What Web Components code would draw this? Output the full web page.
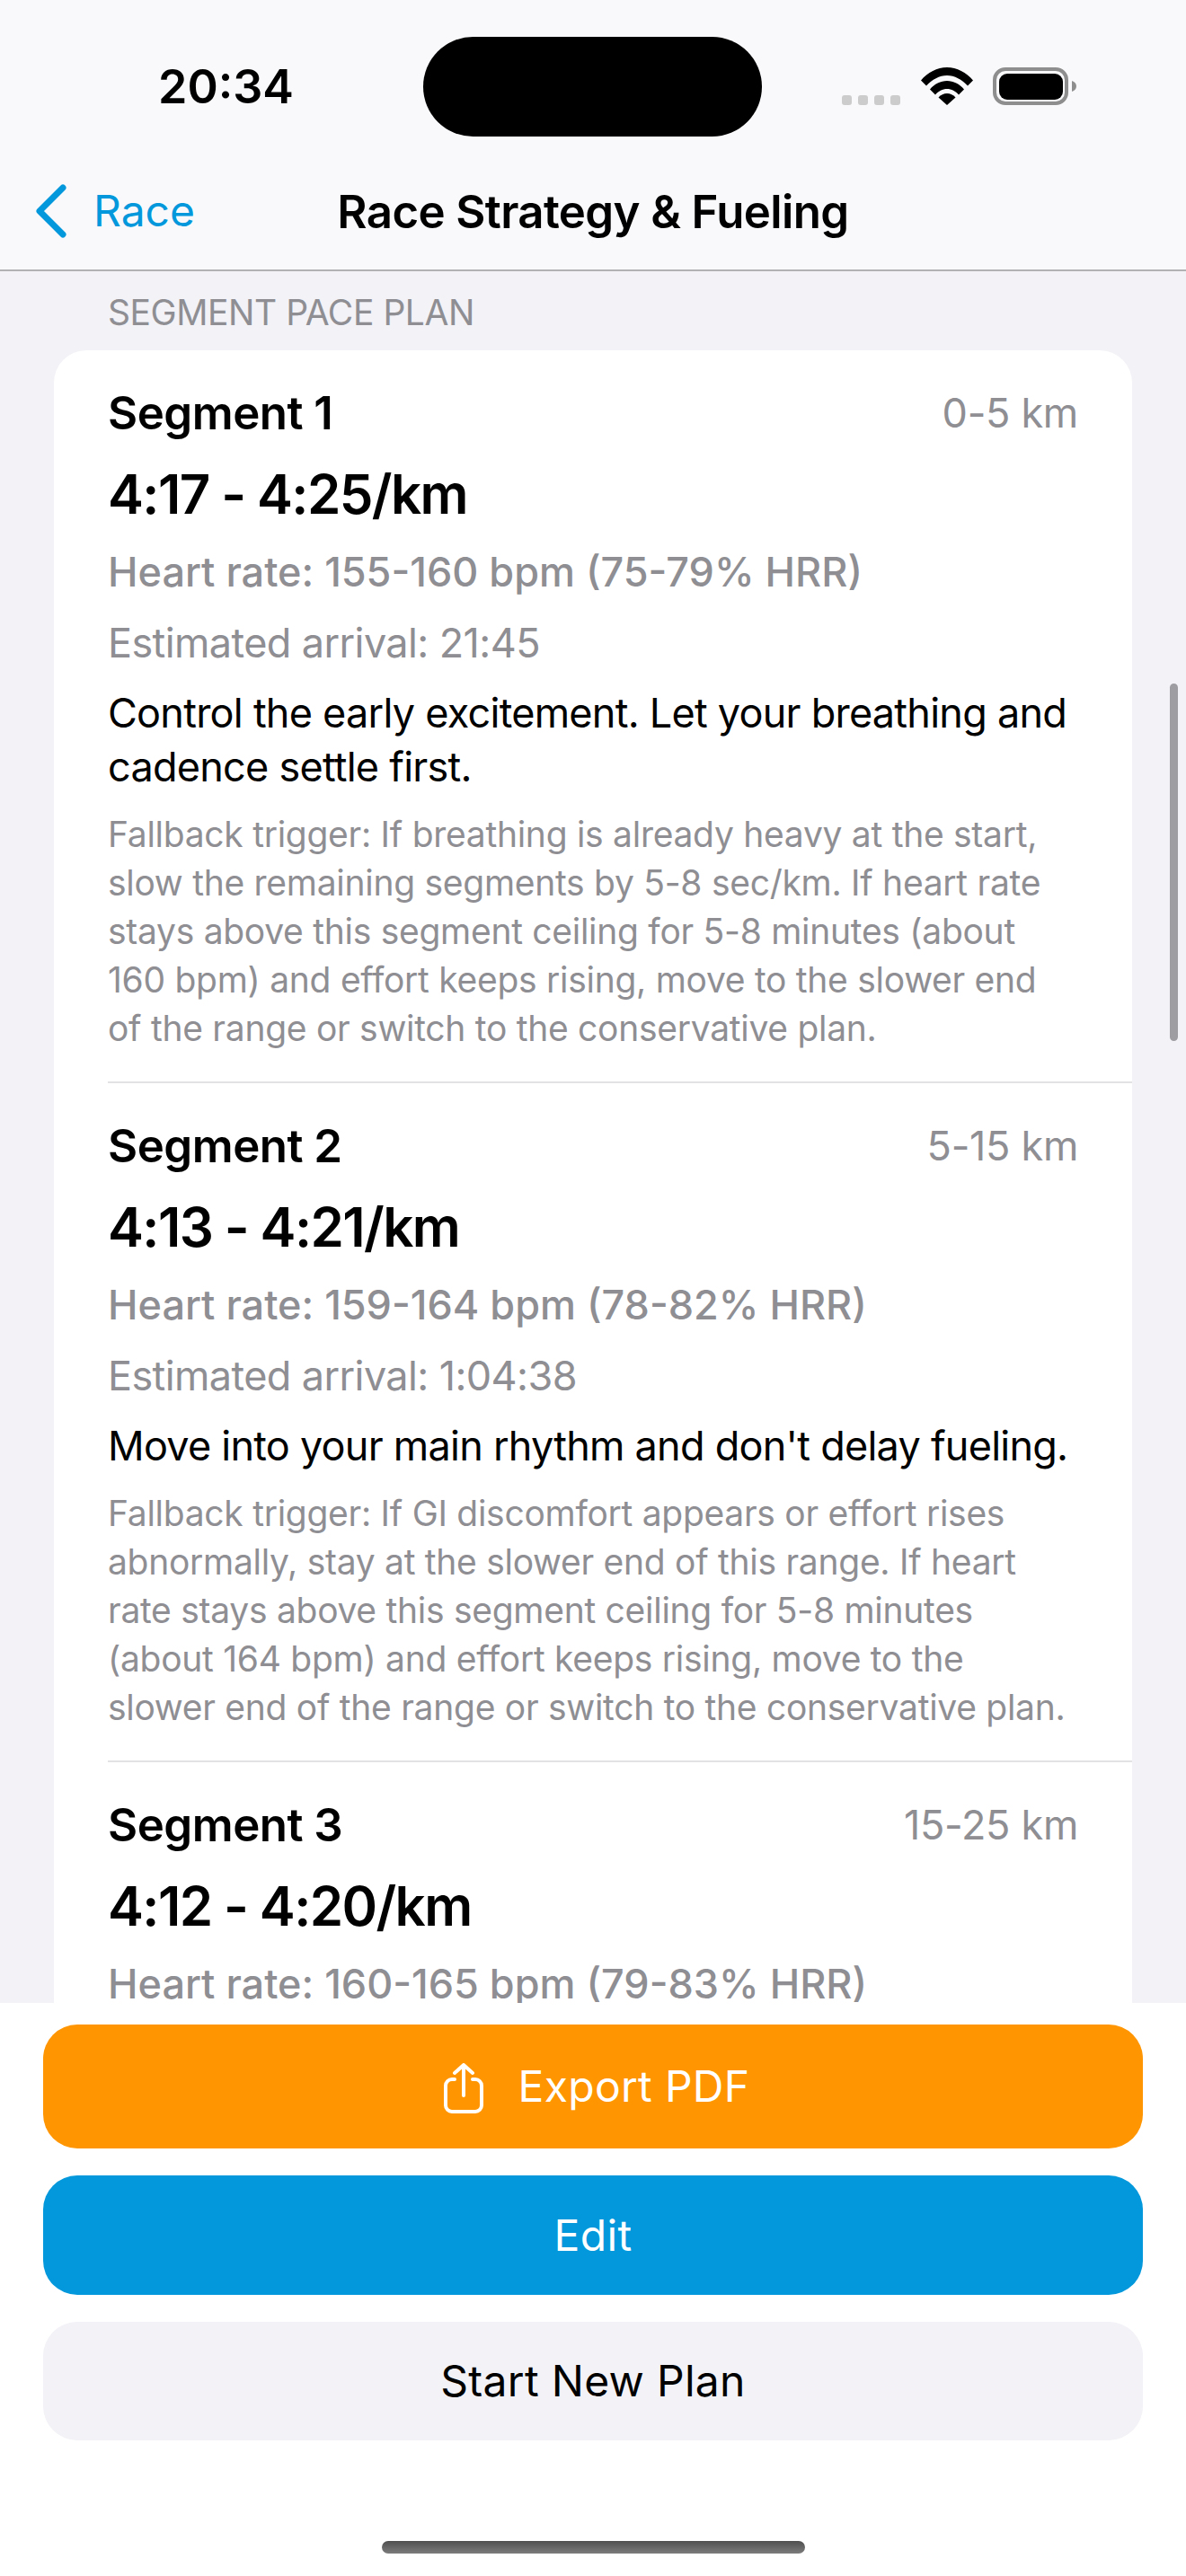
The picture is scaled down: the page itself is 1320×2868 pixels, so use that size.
<!DOCTYPE html>
<html lang="en"><head><meta charset="utf-8"><title>Race Strategy & Fueling</title>
<style>
html,body{margin:0;padding:0;background:#f2f2f7}
body{font-family:Inter,"Liberation Sans",sans-serif;color:#000;-webkit-font-smoothing:antialiased}
</style></head><body>
<race-app>
  <nav-header slot="header"></nav-header>
  <section-label>SEGMENT PACE PLAN</section-label>
  <plan-card>
    <segment-row name="Segment 1" range="0-5 km" pace="4:17 - 4:25/km" hr="Heart rate: 155-160 bpm (75-79% HRR)" eta="Estimated arrival: 21:45">
      <span slot="cue">Control the early excitement. Let your breathing and<br>cadence settle first.</span>
      <span slot="note">Fallback trigger: If breathing is already heavy at the start,<br>slow the remaining segments by 5-8 sec/km. If heart rate<br>stays above this segment ceiling for 5-8 minutes (about<br>160 bpm) and effort keeps rising, move to the slower end<br>of the range or switch to the conservative plan.</span>
    </segment-row>
    <segment-row name="Segment 2" range="5-15 km" pace="4:13 - 4:21/km" hr="Heart rate: 159-164 bpm (78-82% HRR)" eta="Estimated arrival: 1:04:38">
      <span slot="cue">Move into your main rhythm and don't delay fueling.</span>
      <span slot="note">Fallback trigger: If GI discomfort appears or effort rises<br>abnormally, stay at the slower end of this range. If heart<br>rate stays above this segment ceiling for 5-8 minutes<br>(about 164 bpm) and effort keeps rising, move to the<br>slower end of the range or switch to the conservative plan.</span>
    </segment-row>
    <segment-row name="Segment 3" range="15-25 km" pace="4:12 - 4:20/km" hr="Heart rate: 160-165 bpm (79-83% HRR)" last></segment-row>
  </plan-card>
  <action-bar slot="footer"></action-bar>
</race-app>
<script>
customElements.define('race-app',class extends HTMLElement{constructor(){super();this.attachShadow({mode:'open'}).innerHTML=`
<style>
:host{display:flex;flex-direction:column;width:1320px;height:2868px;overflow:hidden;background:#f2f2f7;position:relative}
.scroll{flex:1;min-height:0;overflow:hidden;position:relative;padding:0 60px;display:flex;flex-direction:column}
.bar{position:absolute;left:1302px;top:459px;width:9px;height:398px;border-radius:5px;background:#9d9da2}
</style>
<slot name="header"></slot>
<div class="scroll"><slot></slot><div class="bar"></div></div>
<slot name="footer"></slot>`}});
customElements.define('nav-header',class extends HTMLElement{constructor(){super();this.attachShadow({mode:'open'}).innerHTML=`
<style>
:host{display:block;height:302px;box-sizing:border-box;background:#f9f9fb;border-bottom:2px solid #b2b2b4;flex:none}
.status{height:167px;position:relative;display:flex;align-items:flex-start}
.time{font:600 52px/60px Inter,sans-serif;margin:67px 0 0 176px}
.island{position:absolute;left:471px;top:41px;width:377px;height:111px;border-radius:56px;background:#000}
.right{position:absolute;left:937px;top:75px;display:flex;align-items:flex-end;height:42px}
.dots{display:flex;gap:7px;margin-right:23px}
.dots i{display:block;width:11px;height:11px;border-radius:3px;background:#ccc}
.wifi{display:block;width:58px;height:42px;margin-right:22px}
.batt{display:block;width:93px;height:42px}
.nav{position:relative;height:133px;display:flex;align-items:center}
.back{display:flex;align-items:center;color:#0398dc;font:400 48px/60px Inter,sans-serif;margin:3px 0 0 40px}
.back svg{width:36px;height:60px;margin-right:28px;display:block}
.title{position:absolute;left:0;right:0;top:39px;text-align:center;font:600 51px/60px Inter,sans-serif;letter-spacing:-.63px}
</style>
<div class="status"><div class="time">20:34</div><div class="island"></div>
<div class="right"><div class="dots"><i></i><i></i><i></i><i></i></div>
<svg class="wifi" viewBox="0 0 58 42"><path d="M0 14.500C7.500 5.500 18 0 29 0s21.500 5.500 29 14.500l-6 6C45.500 13.500 37.500 9 29 9S12.500 13.500 6 20.500z"/><path d="M10 24.500C15 18.500 22 15 29 15s14 3.500 19 9.500l-6 6C38.500 26.500 34 24 29 24s-9.500 2.500-13 6.500z"/><path d="M19.500 33.500C22 30.500 25.500 29 29 29s7 1.500 9.500 4.500L29 42z"/></svg>
<svg class="batt" viewBox="0 0 93 42"><rect x="2" y="2" width="80" height="38" rx="12" fill="none" stroke="#8e8e8e" stroke-width="4"/><rect x="7" y="7" width="71" height="29" rx="9"/><path d="M88 15c3 1 5 3 5 6s-2 5-5 6z" fill="#8e8e8e"/></svg>
</div></div>
<div class="nav"><div class="back"><svg viewBox="0 0 36 60"><path d="M30 4 4 30l26 26" fill="none" stroke="#0398dc" stroke-width="7" stroke-linecap="round" stroke-linejoin="round"/></svg>Race</div><div class="title">Race Strategy &amp; Fueling</div></div>`}});
customElements.define('section-label',class extends HTMLElement{constructor(){super();this.attachShadow({mode:'open'}).innerHTML=`
<style>:host{display:block;flex:none;font:400 39px/48px Inter,sans-serif;letter-spacing:-.45px;color:#8e8e93;padding:22px 0 18px 60px;height:48px}</style><slot></slot>`}});
customElements.define('plan-card',class extends HTMLElement{constructor(){super();this.attachShadow({mode:'open'}).innerHTML=`
<style>:host{display:block;flex:none;background:#fff;border-radius:36px;overflow:hidden;padding-left:60px}</style><slot></slot>`}});
customElements.define('segment-row',class extends HTMLElement{constructor(){super();const a=n=>this.getAttribute(n);const line=(c,n)=>a(n)?`<div class="${c}">${a(n)}</div>`:'';this.attachShadow({mode:'open'}).innerHTML=`
<style>
:host{display:block;padding:46px 60px 32px 0;border-bottom:2px solid #e2e2e4}
:host([last]){border-bottom:0}
.top{display:flex;justify-content:space-between;align-items:center;height:48px}
.name{font:600 51px/48px Inter,sans-serif;letter-spacing:-.5px}
.range{font:400 45px/48px Inter,sans-serif;color:#8e8e93;letter-spacing:-.3px}
.pace{font:620 60px/72px Inter,sans-serif;margin-top:30px;letter-spacing:-1.6px}
.hr{font:500 45px/54px Inter,sans-serif;color:#8e8e93;margin-top:24px}
.eta{font:400 45px/54px Inter,sans-serif;color:#8e8e93;margin-top:25px;letter-spacing:-.6px}
.cue{font:400 45px/60px Inter,sans-serif;margin-top:21px;white-space:nowrap;letter-spacing:-.75px}
.note{font:400 39px/54px Inter,sans-serif;color:#8e8e93;margin-top:18px;white-space:nowrap;letter-spacing:-.28px}
</style>
<div class="top"><div class="name">${a('name')}</div><div class="range">${a('range')}</div></div>
${line('pace','pace')}${line('hr','hr')}${line('eta','eta')}
<div class="cue"><slot name="cue"></slot></div>
<div class="note"><slot name="note"></slot></div>`}});
customElements.define('action-button',class extends HTMLElement{constructor(){super();this.attachShadow({mode:'open'}).innerHTML=`
<style>
:host{display:flex;align-items:center;justify-content:center;height:132px;border-radius:38px;font:400 48px/60px Inter,sans-serif;letter-spacing:.3px;flex:none}
:host([tone=orange]){background:#ff9500;color:#fff;height:138px;padding-left:8px;box-sizing:border-box;gap:39px}
:host([tone=blue]){background:#0398dc;color:#fff;height:133px}
:host([tone=gray]){background:#f2f2f7;color:#000}
</style><slot name="icon"></slot><slot></slot>`}});
customElements.define('action-bar',class extends HTMLElement{constructor(){super();this.attachShadow({mode:'open'}).innerHTML=`
<style>
:host{display:flex;flex-direction:column;flex:none;height:638px;box-sizing:border-box;background:#fff;padding:24px 48px 0;position:relative}
.stack{display:flex;flex-direction:column;gap:30px}
.home{position:absolute;left:425px;top:599px;width:471px;height:14px;border-radius:7px;background:linear-gradient(#4f4f4f,#7c7c7c)}
svg{display:block;width:44px;height:56px;margin-top:4px}
</style>
<div class="stack">
<action-button tone="orange"><svg slot="icon" viewBox="0 0 44 56" fill="none" stroke="#fff" stroke-width="4" stroke-linecap="round" stroke-linejoin="round"><path d="M12 18H9a7 7 0 0 0-7 7v22a7 7 0 0 0 7 7h26a7 7 0 0 0 7-7V25a7 7 0 0 0-7-7h-3"/><path d="M22 36V2.500M12 11l10-9 10 9"/></svg>Export PDF</action-button>
<action-button tone="blue">Edit</action-button>
<action-button tone="gray">Start New Plan</action-button>
</div><div class="home"></div>`}});
</script>
</body></html>
